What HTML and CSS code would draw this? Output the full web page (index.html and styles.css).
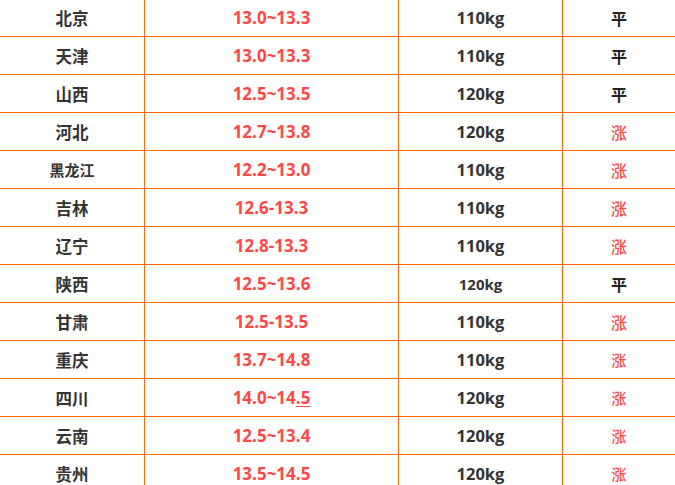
FILE: index.html
```html
<!DOCTYPE html>
<html lang="zh-CN">
<head>
<meta charset="utf-8">
<title>猪价</title>
<link rel="stylesheet" href="styles.css">
</head>
<body>
<table class="price-table">
  <colgroup>
    <col class="c1"><col class="c2"><col class="c3"><col class="c4">
  </colgroup>
  <tbody>
    <tr><td class="prov">北京</td><td class="range">13.0~13.3</td><td class="wt">110kg</td><td class="flat">平</td></tr>
    <tr><td class="prov">天津</td><td class="range">13.0~13.3</td><td class="wt">110kg</td><td class="flat">平</td></tr>
    <tr><td class="prov">山西</td><td class="range">12.5~13.5</td><td class="wt">120kg</td><td class="flat">平</td></tr>
    <tr><td class="prov">河北</td><td class="range">12.7~13.8</td><td class="wt">120kg</td><td class="up">涨</td></tr>
    <tr><td class="prov small">黑龙江</td><td class="range">12.2~13.0</td><td class="wt">110kg</td><td class="up">涨</td></tr>
    <tr><td class="prov">吉林</td><td class="range">12.6-13.3</td><td class="wt">110kg</td><td class="up">涨</td></tr>
    <tr><td class="prov">辽宁</td><td class="range">12.8-13.3</td><td class="wt">110kg</td><td class="up">涨</td></tr>
    <tr><td class="prov">陕西</td><td class="range">12.5~13.6</td><td class="wt small">120kg</td><td class="flat">平</td></tr>
    <tr><td class="prov">甘肃</td><td class="range">12.5-13.5</td><td class="wt">110kg</td><td class="up">涨</td></tr>
    <tr><td class="prov">重庆</td><td class="range">13.7~14.8</td><td class="wt">110kg</td><td class="up up-sm">涨</td></tr>
    <tr><td class="prov">四川</td><td class="range">14.0~14<span class="ul">.5</span></td><td class="wt">120kg</td><td class="up up-sm">涨</td></tr>
    <tr><td class="prov">云南</td><td class="range">12.5~13.4</td><td class="wt">120kg</td><td class="up up-sm">涨</td></tr>
    <tr><td class="prov">贵州</td><td class="range">13.5~14.5</td><td class="wt">120kg</td><td class="up up-sm">涨</td></tr>
  </tbody>
</table>
</body>
</html>
```

FILE: styles.css
```css
html, body {
  margin: 0;
  padding: 0;
  background: #ffffff;
  overflow: hidden;
}

.price-table {
  border-collapse: collapse;
  table-layout: fixed;
  width: 676px;
  margin: -2px 0 0 -1px;
  font-family: "Open Sans", "Noto Sans CJK SC", sans-serif;
  font-weight: 700;
  font-size: 16px;
  color: #333333;
}

.c1 { width: 145px; }
.c2 { width: 254px; }
.c3 { width: 164px; }
.c4 { width: 113px; }

.price-table td {
  border: 1px solid #ff6600;
  height: 37px;
  padding: 0;
  text-align: center;
  vertical-align: middle;
  line-height: 20px;
}

.prov {
  font-family: "Noto Sans CJK SC", sans-serif;
  font-size: 16.5px;
  padding-right: 2px;
}

.prov.small {
  font-size: 15px;
  font-weight: 700;
}

.range {
  color: #ff4747;
  font-size: 17px;
  padding-right: 2px;
}

.ul {
  text-decoration: underline;
  text-underline-offset: 2px;
}

.wt {
  font-size: 16.5px;
  padding-left: 4px;
}

.wt.small {
  font-size: 15px;
}

.flat {
  font-family: "Noto Sans CJK SC", sans-serif;
  color: #222222;
  padding-left: 1px;
}

.up {
  font-family: "Noto Sans CJK SC", sans-serif;
  font-weight: 500;
  color: #ff4a4a;
  padding-left: 1px;
}

.up-sm {
  font-size: 15px;
}
```
